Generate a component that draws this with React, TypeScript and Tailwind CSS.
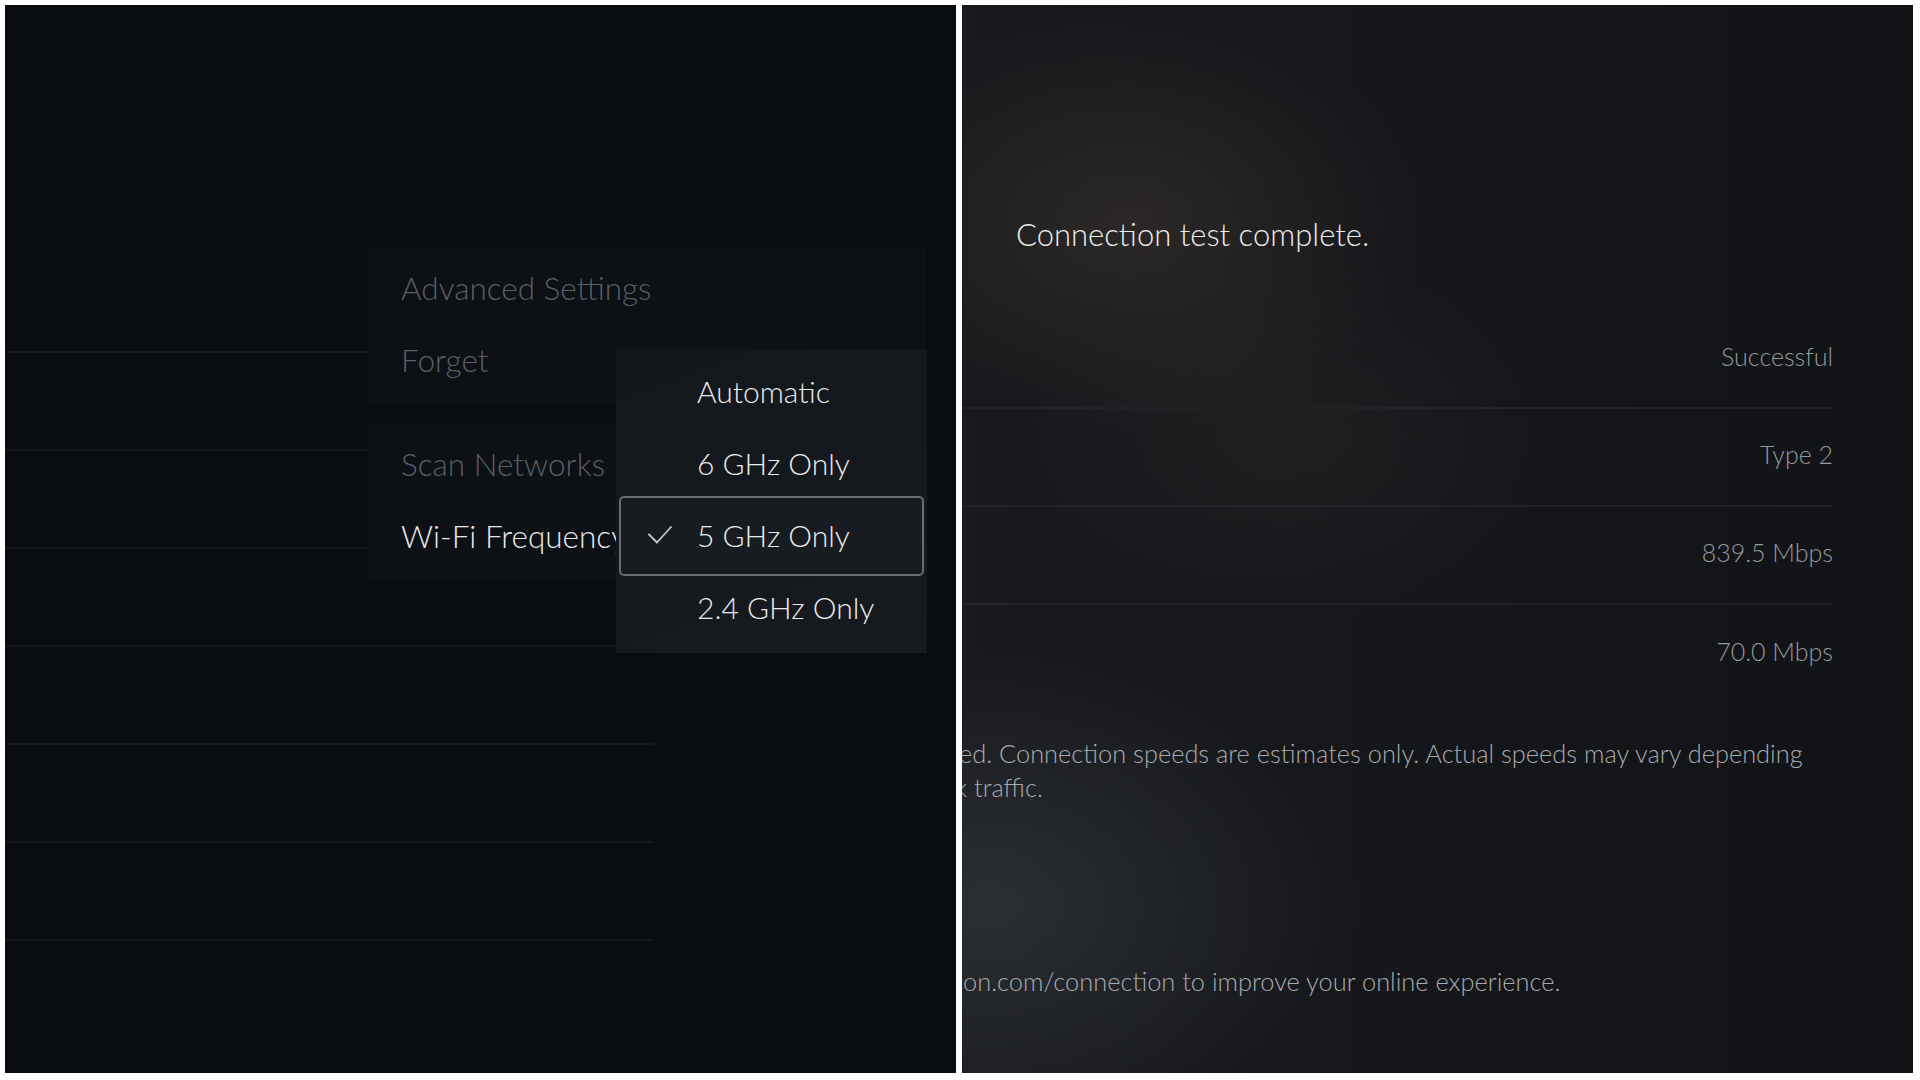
import React from "react";

const face = "font-['Lato','Roboto','Liberation_Sans',sans-serif]";

const listLines = [0, 1, 2, 3, 4, 5, 6];

const results = ["Successful", "Type 2", "839.5 Mbps", "70.0 Mbps"];

const frequencies = [
    { label: "Automatic", selected: false },
    { label: "6 GHz Only", selected: false },
    { label: "5 GHz Only", selected: true },
    { label: "2.4 GHz Only", selected: false },
];

function CheckMark() {
    return (
        <svg width="24" height="18" viewBox="0 0 24 18" fill="none" className="shrink-0">
            <path d="M1 8.5 L9 16.5 L23 1" stroke="#c3c6ca" strokeWidth="1.8" strokeLinecap="round" strokeLinejoin="round" />
        </svg>
    );
}

// a line of text whose start lies past the panel's left edge
function CutLine({ hidden, shown, className }: { hidden: string, shown: string, className: string }) {
    return (
        <div className={`flex whitespace-nowrap ${className}`}>
            <span className="w-0 shrink-0 flex justify-end">{hidden}</span>
            <span className="shrink-0">{shown}</span>
        </div>
    );
}

function NetworkPanel() {
    return (
        <div className="relative w-[951px] h-full overflow-hidden bg-[#090c10]">
            {/* list rows behind the menu */}
            <div className="pt-[346px] w-[649px]">
                {listLines.map((i) => (
                    <div key={i} className="h-[98px] border-t-2 border-[#15181d]"></div>
                ))}
            </div>

            {/* options menu */}
            <div className="absolute left-[364px] top-[242px] w-[557px] flex flex-col gap-[18px] text-[31.5px] font-light">
                <div className="bg-[#0d1015] pt-[6px] pb-[8px] pl-[32px]">
                    <div className="h-[72px] flex items-center text-[#5a5f66]">Advanced Settings</div>
                    <div className="h-[72px] flex items-center text-[#5a5f66]">Forget</div>
                </div>
                <div className="bg-[#0d1015] pt-[6px] pb-[8px] pl-[32px]">
                    <div className="h-[72px] flex items-center text-[#5a5f66]">Scan Networks</div>
                    <div className="h-[72px] flex items-center text-[#e8e9eb] whitespace-nowrap">Wi-Fi Frequency</div>
                </div>
            </div>

            {/* frequency dropdown */}
            <div className="absolute left-[611px] top-[344px] w-[311px] h-[304px] pt-[7px] bg-[linear-gradient(160deg,#13161b,#171a1f)] flex flex-col text-[30px] font-light text-[#eaebed]">
                {frequencies.map((f) =>
                    f.selected ? (
                        <div key={f.label} className="h-[80px] -my-[4px] mx-[3px] border-2 border-[#676b72] rounded-[5px] bg-[#181b20] flex items-center pl-[27px] pb-[2px] gap-[25px]">
                            <CheckMark />
                            <span>{f.label}</span>
                        </div>
                    ) : (
                        <div key={f.label} className="h-[72px] flex items-center pl-[81px] pb-[2px]">{f.label}</div>
                    )
                )}
            </div>
        </div>
    );
}

function ResultPanel() {
    return (
        <div className="relative w-[951px] h-full overflow-hidden bg-[#15171b] bg-[radial-gradient(ellipse_420px_300px_at_170px_220px,rgba(64,55,50,0.5),transparent_70%),radial-gradient(ellipse_380px_260px_at_330px_430px,rgba(52,47,46,0.35),transparent_70%),radial-gradient(ellipse_520px_360px_at_30px_900px,rgba(58,64,70,0.55),transparent_70%),linear-gradient(90deg,#18191d,#111317)]">
            <div className="mt-[211px] pl-[54px] h-[36px] leading-[36px] text-[31px] font-light text-[#eceded]">
                Connection test complete.
            </div>

            <div className="mt-[59px] mr-[80px] flex flex-col">
                {results.map((value, i) => (
                    <div
                        key={value}
                        className={`h-[98px] flex items-center justify-end pb-[5px] text-[25px] font-light text-[#96999e] ${i < results.length - 1 ? "border-b-2 border-[#202328]" : ""}`}
                    >
                        {value}
                    </div>
                ))}
            </div>

            <div className="mt-[33px] text-[25.4px] leading-[34px] font-light text-[#a8abb0]">
                <CutLine
                    className="-ml-[3px]"
                    hidden="Connection quality is not guarante"
                    shown="ed. Connection speeds are estimates only. Actual speeds may vary depending"
                />
                <CutLine
                    className="-ml-[7px]"
                    hidden="on network"
                    shown="k traffic."
                />
            </div>

            <div className="mt-[160px] text-[25.4px] leading-[34px] font-light text-[#a8abb0]">
                <CutLine
                    className="ml-[1px]"
                    hidden="Visit playstati"
                    shown="on.com/connection to improve your online experience."
                />
            </div>
        </div>
    );
}

export default function App() {
    return (
        <div className={`w-[1920px] h-[1080px] bg-white flex gap-[6px] pt-[5px] pl-[5px] pr-[7px] pb-[7px] ${face}`}>
            <NetworkPanel />
            <ResultPanel />
        </div>
    );
}
